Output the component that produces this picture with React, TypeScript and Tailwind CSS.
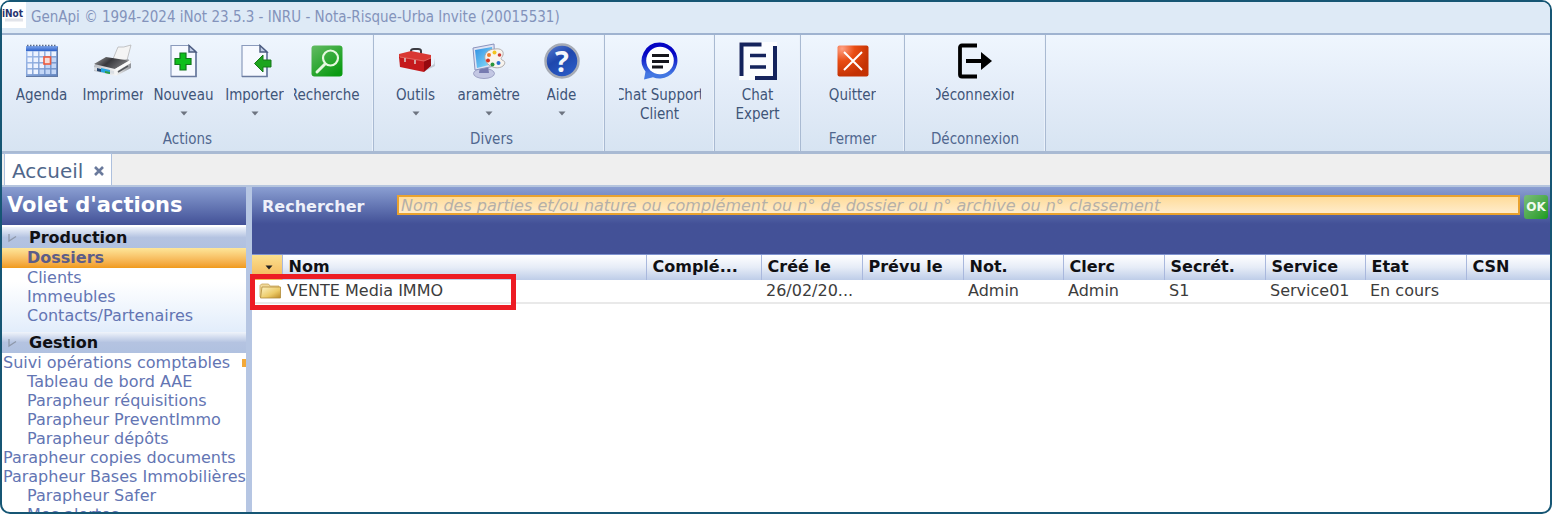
import type { ReactNode } from "react";

function AgendaIcon() {
  return (
    <svg viewBox="0 0 34 34" className="size-[34px]" aria-hidden="true">
      <defs>
        <linearGradient id="agendaTop" x1="0" y1="0" x2="0" y2="1">
          <stop offset="0" stopColor="#7ea6ee" />
          <stop offset="1" stopColor="#2f62c8" />
        </linearGradient>
        <linearGradient id="agendaBody" x1="0" y1="0" x2="1" y2="1">
          <stop offset="0" stopColor="#a9c4f2" />
          <stop offset="1" stopColor="#5f82bd" />
        </linearGradient>
      </defs>
      <rect x="1" y="2" width="32" height="31" fill="url(#agendaBody)" />
      <rect x="1" y="2" width="32" height="5" fill="url(#agendaTop)" />
      <path d="M2 1.500h30" stroke="#5a6a88" strokeWidth="1.500" strokeDasharray="1.5 1.5" />
      {[0, 1, 2, 3].map((row) =>
        [0, 1, 2, 3, 4].map((col) => (
          <rect key={`${row}-${col}`} x={2.5 + col * 6} y={7.5 + row * 6} width="4.600" height="4.600" fill={row + col > 4 ? "#c3d6f6" : "#edf3ff"} />
        )),
      )}
      <path d="M1 32.500h32M32.500 3v30" stroke="#6179a5" />
      <rect x="19" y="13" width="6.500" height="7" fill="#f6dcd8" stroke="#ee5a3c" strokeWidth="1.600" />
    </svg>
  );
}

function PrinterIcon() {
  return (
    <svg viewBox="0 0 40 34" className="h-[34px] w-10" aria-hidden="true">
      <defs>
        <linearGradient id="printerTop" x1="0" y1="0" x2="1" y2="0.4">
          <stop offset="0" stopColor="#a0a0a0" />
          <stop offset="0.5" stopColor="#38383c" />
          <stop offset="1" stopColor="#77777a" />
        </linearGradient>
        <linearGradient id="printerBody" x1="0" y1="0" x2="1" y2="0">
          <stop offset="0" stopColor="#b9bcc2" />
          <stop offset="0.6" stopColor="#f5f5f5" />
          <stop offset="1" stopColor="#8f9298" />
        </linearGradient>
      </defs>
      <path d="M20 15 25 3q5 1 13-2l-5 19z" fill="#f4f4f4" stroke="#b6b6b8" strokeWidth="0.8" />
      <path d="M1 22 3 19 35 15l3 3v6L25 31q-3 1-6 0L1 27z" fill="url(#printerBody)" />
      <path d="M1 20 13 13l19 3 4 1-14 8z" fill="url(#printerTop)" />
      <path d="m22 25 15-9 1 3-14 8z" fill="#fafafa" />
      <path d="M1 23l20 4v3L1 26z" fill="#d9dde2" />
      <path d="m4 24 4 1v3l-4-1z" fill="#26446b" />
      <path d="m8 24 9 2v4l-9-2z" fill="#28a5e0" />
      <path d="m12 27 5 1v2l-5-1z" fill="#2d9f43" />
      <path d="m25 28 10-6" stroke="#55585c" strokeWidth="1.5" />
    </svg>
  );
}

function DocumentShape() {
  return (
    <>
      <path d="M4 1.500h18l7 6v25h-25z" fill="#f6f9ff" stroke="#8b9bbd" strokeWidth="1.200" />
      <path d="M4 32.500h25V8" stroke="#6b7b9f" strokeWidth="1.600" fill="none" />
      <path d="M22 1.500v6.500h7z" fill="#bfcce6" stroke="#4c5c80" strokeWidth="1.400" />
    </>
  );
}

function NewIcon() {
  return (
    <svg viewBox="0 0 34 34" className="size-[34px]" aria-hidden="true">
      <DocumentShape />
      <path d="M13 9h6v5.500h5v6h-5V26h-6v-5.500H8v-6h5z" fill="#0fbf1c" stroke="#11781b" strokeWidth="1.200" />
    </svg>
  );
}

function ImportIcon() {
  return (
    <svg viewBox="0 0 34 34" className="size-[34px]" aria-hidden="true">
      <DocumentShape />
      <path d="M16.500 19.500 25 11v5h8v7h-8v5z" fill="#1da51d" stroke="#16761a" />
    </svg>
  );
}

function SearchIcon() {
  return (
    <svg viewBox="0 0 34 34" className="size-[34px]" aria-hidden="true">
      <defs>
        <linearGradient id="searchGreen" x1="0" y1="0" x2="0.7" y2="1">
          <stop offset="0" stopColor="#63bb63" />
          <stop offset="1" stopColor="#0a9b12" />
        </linearGradient>
      </defs>
      <rect x="1.500" y="1.500" width="31" height="31" rx="3" fill="url(#searchGreen)" />
      <circle cx="20.500" cy="14" r="7.500" fill="none" stroke="#e6f8df" strokeWidth="2.200" />
      <path d="M15 20 7 28" stroke="#e6f8df" strokeWidth="3" strokeLinecap="round" />
    </svg>
  );
}

function ToolboxIcon() {
  return (
    <svg viewBox="0 0 38 34" className="h-[34px] w-[38px]" aria-hidden="true">
      <path d="m28 27 9-7v-6l1 8z" fill="#9aa0aa" opacity="0.5" />
      <path d="M14 9V7q0-2 3-2h4q3 0 3 2v3" fill="none" stroke="#3c3c42" strokeWidth="2" />
      <path d="m2 10 12-3 20 4v4l-7 3-25-4z" fill="#d93833" />
      <path d="m2 13 25 4v11L3 23z" fill="#c51a1d" />
      <path d="m27 17 7-3v8l-7 6z" fill="#96090f" />
      <path d="m3 13 24 4 7-3" stroke="#e8746d" strokeWidth="0.800" fill="none" />
      <path d="M8 14v4M18 16v4" stroke="#d9c5c2" strokeWidth="1.600" />
    </svg>
  );
}

function SettingsIcon() {
  return (
    <svg viewBox="0 0 36 38" className="h-[38px] w-9" aria-hidden="true">
      <defs>
        <linearGradient id="monitorScreen" x1="0" y1="0" x2="1" y2="1">
          <stop offset="0" stopColor="#2f8fe2" />
          <stop offset="1" stopColor="#8fe3fb" />
        </linearGradient>
      </defs>
      <ellipse cx="13" cy="31.500" rx="10.500" ry="5" fill="#c3c7e3" stroke="#8f93ba" strokeWidth="0.800" />
      <path d="M9 24h8l1 7H8z" fill="#777bb0" />
      <path d="M2 6 23 2l1 22-20 4z" fill="#dfe3f4" stroke="#8b93bd" />
      <path d="m4 8 17-3 1 17-16 4z" fill="url(#monitorScreen)" />
      <path d="M24 7c6-1 9 2 8 6-1 3-3 3-1 5 3 1 4 3 1 6-4 3-10 2-14-1s-6-9-2-13c2-2 5-3 8-3z" fill="#f8f4ee" stroke="#a9a5a5" strokeWidth="0.900" />
      <circle cx="18" cy="13" r="2" fill="#ef7c28" />
      <circle cx="23.500" cy="10.500" r="2" fill="#f2c51e" />
      <circle cx="28.500" cy="13" r="1.800" fill="#cc3c36" />
      <circle cx="17" cy="18.500" r="2" fill="#d5331e" />
      <circle cx="21.500" cy="22.500" r="2" fill="#29953b" />
      <circle cx="27.500" cy="21" r="2" fill="#2b6fd1" />
    </svg>
  );
}

function HelpIcon() {
  return (
    <svg viewBox="0 0 38 38" className="size-[38px]" aria-hidden="true">
      <defs>
        <linearGradient id="helpBlue" x1="0" y1="0" x2="0.600" y2="1">
          <stop offset="0" stopColor="#5c7fd4" />
          <stop offset="0.500" stopColor="#1e47ad" />
          <stop offset="1" stopColor="#2a5ac4" />
        </linearGradient>
      </defs>
      <circle cx="19" cy="19" r="16.500" fill="url(#helpBlue)" stroke="#a6abb5" strokeWidth="2.500" />
      <text x="19" y="29.500" textAnchor="middle" fontSize="29" fontWeight="700" fill="#f4f6fb" fontFamily="Open Sans, sans-serif">?</text>
    </svg>
  );
}

function ChatSupportIcon() {
  return (
    <svg viewBox="0 0 40 40" className="size-10" aria-hidden="true">
      <defs>
        <linearGradient id="chatBlue" x1="0" y1="0" x2="0" y2="1">
          <stop offset="0.300" stopColor="#0505c4" />
          <stop offset="0.850" stopColor="#4377e2" />
        </linearGradient>
      </defs>
      <path d="M20 1.500a18 18 0 1 1-7 34.800L4 38.500l1.500-8A18 18 0 0 1 20 1.500z" fill="url(#chatBlue)" />
      <circle cx="20" cy="19.500" r="13.800" fill="#fff" />
      <path d="M12 14.500h17M12 20.500h17M12 26h11" stroke="#16161b" strokeWidth="2.800" />
    </svg>
  );
}

function ChatExpertIcon() {
  return (
    <svg viewBox="0 0 40 40" className="size-10" aria-hidden="true">
      <path d="M1 1h38v38H1z" fill="#fff" opacity="0.800" />
      <path d="M3.500 35V3.500h20M37 5v32H17" fill="none" stroke="#14235c" strokeWidth="4" />
      <path d="M12 14.500h16M12 26h16" stroke="#14235c" strokeWidth="3.600" />
    </svg>
  );
}

function QuitIcon() {
  return (
    <svg viewBox="0 0 34 34" className="size-[34px]" aria-hidden="true">
      <defs>
        <radialGradient id="quitRed" cx="0.150" cy="0.100" r="0.900">
          <stop offset="0" stopColor="#ffa184" />
          <stop offset="0.450" stopColor="#e94d14" />
          <stop offset="1" stopColor="#c43204" />
        </radialGradient>
      </defs>
      <rect x="1.500" y="1.500" width="31" height="31" rx="2" fill="url(#quitRed)" />
      <path d="m8 8 18 18M26 8 8 26" stroke="#fff" strokeWidth="2" />
    </svg>
  );
}

function LogoutIcon() {
  return (
    <svg viewBox="0 0 36 36" className="size-9" aria-hidden="true">
      <path d="M20 2.500H5q-2 0-2 2v27q0 2 2 2h15" fill="none" stroke="#000" strokeWidth="3.800" />
      <path d="M9 18h17" stroke="#000" strokeWidth="4" />
      <path d="m24 9 11 9-11 9z" fill="#000" />
    </svg>
  );
}

function FolderIcon() {
  return (
    <svg viewBox="0 0 22 16" className="h-4 w-[22px]" aria-hidden="true">
      <defs>
        <linearGradient id="folderGold" x1="0" y1="0" x2="1" y2="1">
          <stop offset="0" stopColor="#fdf3c4" />
          <stop offset="0.600" stopColor="#ecca66" />
          <stop offset="1" stopColor="#bd8a25" />
        </linearGradient>
      </defs>
      <path d="M1 14V2.500L2.500 1h7L11 3h9v11z" fill="#f0d99a" stroke="#c9a65a" strokeWidth="0.800" />
      <path d="M3 4h18.500v11H1.500z" fill="url(#folderGold)" stroke="#b18c3a" strokeWidth="0.800" />
    </svg>
  );
}

type RibbonItemProps = {
  icon: ReactNode;
  label: string;
  width: string;
  labelBox?: string;
  menu?: boolean;
};

function RibbonItem({ icon, label, width, labelBox = "justify-center", menu = false }: RibbonItemProps) {
  return (
    <button type="button" className={`flex flex-col items-center ${width}`}>
      <span className="flex h-10 items-center justify-center">{icon}</span>
      <span className={`mt-[5px] flex overflow-hidden text-center leading-[19px] whitespace-pre ${labelBox}`}>
        <span className="shrink-0">{label}</span>
      </span>
      {menu && (
        <svg viewBox="0 0 8 5" className="mt-[6px] h-[5px] w-2" aria-hidden="true">
          <path d="M0.500 0.500h7L4 4.500z" fill="#6d7480" />
        </svg>
      )}
    </button>
  );
}

function RibbonGroup({ title, className, children }: { title?: string; className: string; children: ReactNode }) {
  return (
    <section className={`flex shrink-0 flex-col justify-between border-r border-[#a9bad2] shadow-[inset_-1px_0_0_#eaf1fa] ${className}`}>
      <div className="flex items-start pt-[6px]">{children}</div>
      {title && <h2 className="pb-[3px] text-center leading-[18px] text-[#50678f]">{title}</h2>}
    </section>
  );
}

function SectionTitle({ children }: { children: ReactNode }) {
  return (
    <h3 className="flex h-[21px] items-center bg-linear-to-b from-[#f0f4fb] via-[#b4c3e1] via-50% to-[#b0c1e0] pl-[5px] font-bold text-[#101014]">
      <svg viewBox="0 0 12 10" className="mr-[10px] h-[10px] w-3" aria-hidden="true">
        <path d="M2 1v7l7-4.500" fill="none" stroke="#8e98aa" strokeWidth="1.300" />
      </svg>
      {children}
    </h3>
  );
}

function ActionLink({ label, flush = false, mark = false }: { label: string; flush?: boolean; mark?: boolean }) {
  return (
    <li>
      <a href="#" className={`flex items-center justify-between leading-[19px] whitespace-nowrap ${flush ? "pl-px" : "pl-[25px]"}`}>
        {label}
        {mark && <span className="h-2 w-1 bg-[#f3a93a]" />}
      </a>
    </li>
  );
}

const management = [
  { label: "Suivi opérations comptables", flush: true, mark: true },
  { label: "Tableau de bord AAE" },
  { label: "Parapheur réquisitions" },
  { label: "Parapheur PreventImmo" },
  { label: "Parapheur dépôts" },
  { label: "Parapheur copies documents", flush: true },
  { label: "Parapheur Bases Immobilières", flush: true },
  { label: "Parapheur Safer" },
  { label: "Mes alertes" },
];

const columns = [
  { title: "Nom", value: "VENTE Media IMMO", width: "w-[364px]" },
  { title: "Complé...", value: "", width: "w-[115px]" },
  { title: "Créé le", value: "26/02/20...", width: "w-[101px]" },
  { title: "Prévu le", value: "", width: "w-[101px]" },
  { title: "Not.", value: "Admin", width: "w-[100px]" },
  { title: "Clerc", value: "Admin", width: "w-[101px]" },
  { title: "Secrét.", value: "S1", width: "w-[101px]" },
  { title: "Service", value: "Service01", width: "w-[100px]" },
  { title: "Etat", value: "En cours", width: "w-[101px]" },
  { title: "CSN", value: "", width: "" },
];

export default function App() {
  return (
    <div className="flex h-screen flex-col overflow-hidden rounded-[10px] border-2 border-[#165674] bg-white font-['DejaVu_Sans',Verdana,sans-serif] text-[16px]">
      <header className="shrink-0 font-['DejaVu_Sans_Condensed','DejaVu_Sans',sans-serif] text-[15px] text-[#3f5578]">
        <div className="flex h-[31px] items-center bg-[#deeaf6]">
          <svg viewBox="0 0 24 26" className="h-[26px] w-6 self-start" aria-hidden="true">
            <path d="M0 0h24v26H0z" fill="#fff" />
            <text x="0" y="15" fontSize="10" fontWeight="700" fill="#28336e" fontFamily="DejaVu Sans Condensed, sans-serif">iNot</text>
            <path d="M3 18h18" stroke="#e2e4ea" strokeWidth="3" />
          </svg>
          <h1 className="pl-[5px] text-[#8393bb]">GenApi © 1994-2024 iNot 23.5.3 - INRU - Nota-Risque-Urba Invite (20015531)</h1>
        </div>
        <div className="flex h-[118px] border-t-2 border-[#9fb3d0] bg-linear-to-b from-[#eff6fe] via-[#e3ecf8] via-50% to-[#d7e4f2]">
          <RibbonGroup title="Actions" className="w-[372px] pr-1 pl-1">
            <RibbonItem icon={<AgendaIcon />} label="Agenda" width="w-[71px]" />
            <RibbonItem icon={<PrinterIcon />} label="Imprimer" width="w-[71px]" labelBox="w-[60px] justify-start" />
            <RibbonItem icon={<NewIcon />} label="Nouveau" width="w-[71px]" menu />
            <RibbonItem icon={<ImportIcon />} label="Importer" width="w-[71px]" menu />
            <RibbonItem icon={<SearchIcon />} label="Recherche" width="w-[73px]" labelBox="w-[66px] justify-end" />
          </RibbonGroup>
          <RibbonGroup title="Divers" className="w-[231px] pl-[5px]">
            <RibbonItem icon={<ToolboxIcon />} label="Outils" width="w-[73px]" menu />
            <RibbonItem icon={<SettingsIcon />} label="Paramètres" width="w-[73px]" labelBox="w-[62px] justify-center" menu />
            <RibbonItem icon={<HelpIcon />} label="Aide" width="w-[73px]" menu />
          </RibbonGroup>
          <RibbonGroup className="w-[110px]">
            <RibbonItem icon={<ChatSupportIcon />} label={"Chat Support\nClient"} width="w-full" labelBox="w-[82px] justify-center" />
          </RibbonGroup>
          <RibbonGroup className="w-[86px]">
            <RibbonItem icon={<ChatExpertIcon />} label={"Chat\nExpert"} width="w-full" />
          </RibbonGroup>
          <RibbonGroup title="Fermer" className="w-[104px]">
            <RibbonItem icon={<QuitIcon />} label="Quitter" width="w-full" />
          </RibbonGroup>
          <RibbonGroup title="Déconnexion" className="w-[141px]">
            <RibbonItem icon={<LogoutIcon />} label="Déconnexion" width="w-full" labelBox="w-[78px] justify-center" />
          </RibbonGroup>
        </div>
      </header>

      <nav className="flex h-9 shrink-0 items-end border-t-3 border-b-2 border-t-[#a9bad3] border-b-[#b5c5de] bg-[#efefef] pl-[2px]">
        <div className="flex h-8 items-center border border-b-0 border-[#adc0de] bg-white pt-[2px] pr-[6px] pl-[7px]">
          <a href="#" className="text-[20px] text-[#50678b]">Accueil</a>
          <button type="button" aria-label="Fermer l'onglet Accueil" className="ml-[10px]">
            <svg viewBox="0 0 12 12" className="size-3" aria-hidden="true">
              <path d="m2 2 8 8M10 2l-8 8" stroke="#6a7a9c" strokeWidth="2.600" />
            </svg>
          </button>
        </div>
      </nav>

      <div className="flex min-h-0 grow">
        <aside className="w-[250px] shrink-0 overflow-hidden border-r-6 border-[#b6c6e3] text-[#6375b3]">
          <h2 className="flex h-[38px] items-center bg-linear-to-b from-[#8b9fd2] to-[#435197] pl-[5px] text-[21px] font-bold text-white">Volet d&apos;actions</h2>
          <div className="h-[2px] bg-white" />
          <SectionTitle>Production</SectionTitle>
          <ul className="bg-linear-to-b from-white from-40% to-[#e2edfb] pb-[7px]">
            <li>
              <a href="#" className="block h-5 bg-linear-to-b from-[#fde699] to-[#f09a18] pl-[25px] leading-5 font-bold text-[#5c5c88]">Dossiers</a>
            </li>
            <ActionLink label="Clients" />
            <ActionLink label="Immeubles" />
            <ActionLink label="Contacts/Partenaires" />
          </ul>
          <SectionTitle>Gestion</SectionTitle>
          <ul>
            {management.map((item) => (
              <ActionLink key={item.label} {...item} />
            ))}
          </ul>
        </aside>

        <main className="min-w-0 grow">
          <form className="flex h-[68px] items-start border-b border-[#7f92cf] bg-linear-to-b from-[#8b9fd2] to-[#435197] to-55% pt-2 pr-[2px] pl-[10px]">
            <label htmlFor="search" className="w-[135px] leading-6 font-bold text-[#eef0fa]">Rechercher</label>
            <input
              id="search"
              type="text"
              placeholder="Nom des parties et/ou nature ou complément ou n° de dossier ou n° archive ou n° classement"
              className="h-5 min-w-0 grow border-2 border-[#e9a22f] bg-linear-to-b from-[#ffdc9a] to-[#ffeccb] px-[2px] pt-[2px] italic outline-none placeholder:text-[#b5b0a8] placeholder:opacity-100"
            />
            <button type="submit" className="ml-1 h-6 w-6 rounded-[3px] bg-linear-to-br from-[#79bd79] to-[#129b18] text-[12px] font-bold text-[#f1faee]">OK</button>
          </form>
          <table className="w-full table-fixed border-collapse text-left">
            <thead>
              <tr className="h-[25px] bg-linear-to-b from-white via-[#e6ecf7] to-[#becde8]">
                <th className="w-[30px] bg-linear-to-b from-[#fbe08f] to-[#f3b453] p-0">
                  <button type="button" aria-label="Trier" className="flex h-[25px] w-full items-center justify-center pl-1">
                    <svg viewBox="0 0 8 5" className="h-[5px] w-2" aria-hidden="true">
                      <path d="M0.500 0.500h7L4 4.500z" fill="#202020" />
                    </svg>
                  </button>
                </th>
                {columns.map((column) => (
                  <th key={column.title} scope="col" className={`border-l border-[#a9b8dd] p-0 pb-[2px] pl-[6px] leading-[22px] font-bold text-[#101014] ${column.width}`}>{column.title}</th>
                ))}
              </tr>
            </thead>
            <tbody>
              <tr className="h-[23px] border-b-2 border-[#e9e9e9] text-[#3c3c3c]">
                <td className="relative p-0 pl-[7px]">
                  <FolderIcon />
                  <span className="pointer-events-none absolute -top-[6px] -left-[2px] z-10 h-9 w-[266px] border-5 border-[#ed1c24]" />
                </td>
                {columns.map((column) => (
                  <td key={column.title} className="overflow-hidden p-0 pl-[5px] leading-5 whitespace-nowrap">{column.value}</td>
                ))}
              </tr>
            </tbody>
          </table>
        </main>
      </div>
    </div>
  );
}
